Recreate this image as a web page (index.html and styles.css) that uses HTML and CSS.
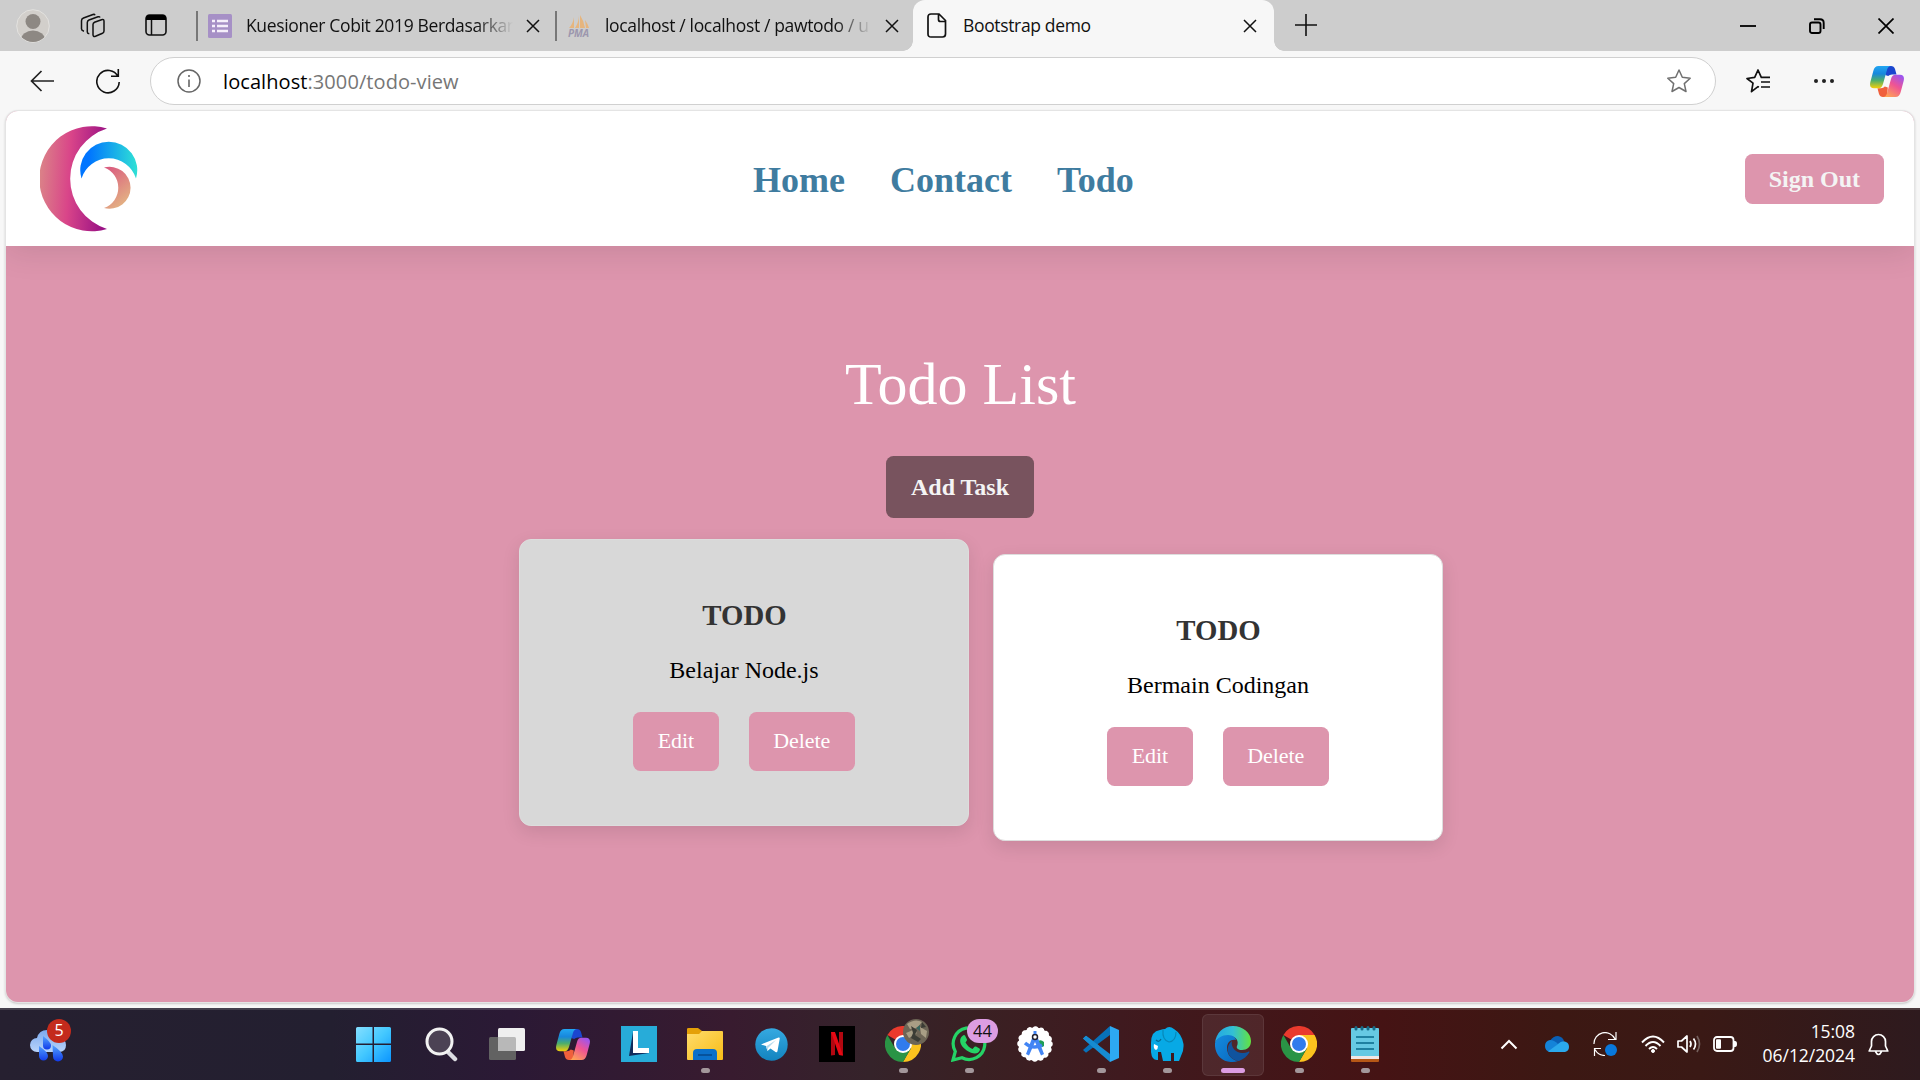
FILE: index.html
```html
<!DOCTYPE html>
<html lang="id">
<head>
<meta charset="utf-8">
<title>Bootstrap demo</title>
<link rel="stylesheet" href="styles.css">
</head>
<body>
<svg class="defs" width="0" height="0" aria-hidden="true">
  <defs>
    <linearGradient id="cpTop" x1="0" y1="0" x2="0" y2="1"><stop offset="0" stop-color="#22a6f2"/><stop offset=".35" stop-color="#1787dc"/><stop offset=".65" stop-color="#4dae6c"/><stop offset="1" stop-color="#f4cf09"/></linearGradient>
    <linearGradient id="cpBottom" x1=".8" y1="0" x2=".2" y2="1"><stop offset="0" stop-color="#9b55f0"/><stop offset=".45" stop-color="#ef5494"/><stop offset="1" stop-color="#ffa653"/></linearGradient>
    <symbol id="copilot" viewBox="0 0 34 31">
      <path d="M17 0h4q3 0 4 3l1.500 5.500H22q-2.500 0-3.800 1.500l-3-1z" fill="#1b46cf"/>
      <path d="M17 31h-4q-3 0-4-3L7.500 22.200H11q2.500 0 3.800-1.700l3 1z" fill="#f0603c"/>
      <path d="M8.500 0H21q-2.800 0-3.900 3.500L13 18q-1.200 4.200-4.300 4.200H4q-5 0-3.700-6L3.300 5Q4.500 0 8.500 0z" fill="url(#cpTop)"/>
      <path d="M25.500 31H13q2.800 0 3.900-3.500L21 13q1.200-4.200 4.300-4.200H30q5 0 3.700 6L30.700 26q-1.200 5-5.200 5z" fill="url(#cpBottom)"/>
    </symbol>
    <symbol id="chrome" viewBox="0 0 36 36">
      <path d="M18 18 2.400 9A18 18 0 0 1 33.600 9z" fill="#ea3a2d"/>
      <path d="M18 9H33.600A18 18 0 0 1 18 36L25.800 22.500z" fill="#fcc31e"/>
      <path d="M10.200 22.500 2.400 9A18 18 0 0 0 18 36L25.800 22.500z" fill="#2a9445"/>
      <circle cx="18" cy="18" r="9" fill="#fff"/><circle cx="18" cy="18" r="7" fill="#317bed"/>
    </symbol>
    <symbol id="close" viewBox="0 0 14 14"><path d="M1 1l12 12M13 1L1 13" fill="none" stroke="#111" stroke-width="1.500"/></symbol>
  </defs>
</svg>

<header class="tabstrip">
  <div class="tab-tools">
    <svg class="profile" width="34" height="34" viewBox="0 0 34 34"><defs><clipPath id="pc"><circle cx="17" cy="17" r="16"/></clipPath></defs><circle cx="17" cy="17" r="16.300" fill="#d2cfcb" stroke="#e3e2df"/><g fill="#8d8883" clip-path="url(#pc)"><circle cx="17" cy="12.500" r="7.500"/><ellipse cx="17" cy="31" rx="12" ry="9.500"/></g></svg>
    <svg class="workspaces" width="26" height="25" viewBox="0 0 26 25" fill="none" stroke="#111" stroke-width="1.500" stroke-linejoin="round"><path d="M13 11.500q0-1.500 1.500-2.200l7-2.600q2.500-.7 2.500 1.500V18q0 1.500-1.500 2.200l-7 3q-2.500.8-2.500-1.400z"/><path d="M20 4.500q-.5-1.200-2-.7L9 7Q7.300 7.700 7.300 9.500V19q0 1.500 2 1.800"/><path d="M15 2.300q-.5-1.300-2-.8L3.500 5Q1.500 5.800 1.500 7.800V16q0 1.500 2.500 2.200"/></svg>
    <svg class="tab-menu" width="22" height="22" viewBox="0 0 22 22"><rect x="1" y="1" width="20" height="20" rx="3.500" fill="none" stroke="#111" stroke-width="1.600"/><path d="M1 6V4q0-3 3-3h14q3 0 3 3v2z" fill="#000"/><path d="M6.500 6v15" stroke="#111" stroke-width="1.500"/></svg>
  </div>
  <div class="tab">
    <svg width="24" height="24" viewBox="0 0 24 24"><rect width="24" height="24" rx="1.500" fill="#a690c6"/><path d="M9 7h11M9 12h11M9 17h11" stroke="#f5effb" stroke-width="2.500"/><path d="M4 7h3M4 12h3M4 17h3" stroke="#f5effb" stroke-width="2.500"/></svg>
    <span class="tab-title fade">Kuesioner Cobit 2019 Berdasarkan</span>
    <svg class="x" width="14" height="14"><use href="#close"/></svg>
  </div>
  <div class="tab">
    <svg class="pma" width="24" height="24" viewBox="0 0 24 24"><path d="M7 3v11H2q4-4 5-11zM12 1v13H8q4-6 4-13zM13 1q4 6 5 13h-5zM18 6q3 4 4 8h-3z" fill="#e6b57e"/><text x="11.500" y="23" text-anchor="middle" class="pma-text">PMA</text></svg>
    <span class="tab-title fade">localhost / localhost / pawtodo / u</span>
    <svg class="x" width="14" height="14"><use href="#close"/></svg>
  </div>
  <div class="tab active">
    <svg width="20" height="25" viewBox="0 0 20 25"><path d="M4 1h8l6.500 6.500V21q0 3-3 3H4q-3 0-3-3V4q0-3 3-3zM11.500 1v5.500q0 2 2 2h5" fill="none" stroke="#111" stroke-width="1.700"/></svg>
    <span class="tab-title">Bootstrap demo</span>
    <svg class="x" width="14" height="14"><use href="#close"/></svg>
  </div>
  <svg class="new-tab" width="22" height="22" viewBox="0 0 22 22"><path d="M11 0v22M0 11h22" stroke="#111" stroke-width="1.600"/></svg>
  <div class="window-buttons">
    <svg width="16" height="16" viewBox="0 0 16 16"><path d="M0 8h16" stroke="#000" stroke-width="1.800"/></svg>
    <svg width="16" height="16" viewBox="0 0 16 16" fill="none" stroke="#000" stroke-width="1.900"><rect x="1" y="4.500" width="10.500" height="10.500" rx="2"/><path d="M5 1.300h6q3.700 0 3.700 3.700v6"/></svg>
    <svg width="16" height="16" viewBox="0 0 16 16"><path d="M.5.500l15 15M15.500.500l-15 15" stroke="#000" stroke-width="1.700"/></svg>
  </div>
</header>

<div class="toolbar">
  <svg class="back" width="24" height="22" viewBox="0 0 24 22"><path d="M24 11H1M11.500 1L1.500 11l10 10" fill="none" stroke="#222" stroke-width="1.700"/></svg>
  <svg class="reload" width="24" height="25" viewBox="0 0 24 25"><path d="M22 7.500A11.200 11.200 0 1 0 23.200 13M22.300 0v7.300h-7.300" fill="none" stroke="#111" stroke-width="1.600"/></svg>
  <div class="address">
    <svg width="24" height="24" viewBox="0 0 24 24"><circle cx="12" cy="12" r="11" fill="none" stroke="#666" stroke-width="1.500"/><path d="M12 10.500v7.500M12 6v2" stroke="#666" stroke-width="1.600"/></svg>
    <span class="url"><span class="host">localhost</span>:3000/todo-view</span>
    <svg class="star" width="24" height="24" viewBox="0 0 24 24"><path d="M12 1l3.300 7.300 7.900.9-5.900 5.400 1.700 7.900-7-4-7 4 1.700-7.900L.8 9.200l7.900-.9z" fill="none" stroke="#707070" stroke-width="1.500" stroke-linejoin="round"/></svg>
  </div>
  <svg class="favs" width="24" height="24" viewBox="0 0 24 24" fill="none" stroke="#111" stroke-width="1.700" stroke-linejoin="round"><path d="M13 18l-1-.3-6.500 5 1.500-8.500L1 9.500l7.700-1.200L12 1l3.300 7.300H24M15 13h9M15 18h9"/></svg>
  <svg class="dots" width="20" height="6" viewBox="0 0 20 6" fill="#222"><circle cx="2" cy="3" r="2"/><circle cx="10" cy="3" r="2"/><circle cx="18" cy="3" r="2"/></svg>
  <svg class="copilot-top" width="34" height="31"><use href="#copilot"/></svg>
</div>

<div class="viewport">
  <nav class="navbar">
    <svg class="logo" width="98" height="106" viewBox="0 0 98 106">
      <defs>
        <linearGradient id="lg1" x1="0" y1=".45" x2="1.150" y2=".55"><stop offset="0" stop-color="#db8388"/><stop offset=".38" stop-color="#d94589"/><stop offset="1" stop-color="#850083"/></linearGradient>
        <linearGradient id="lg2"><stop offset=".15" stop-color="#0075ff"/><stop offset="1" stop-color="#2fe1d5"/></linearGradient>
        <linearGradient id="lg3" x1="0" y1="0" x2=".5" y2="1"><stop offset="0" stop-color="#d9557f"/><stop offset="1" stop-color="#e3b083"/></linearGradient>
      </defs>
      <path d="M67 2.500A52.500 52.500 0 1 0 67 103A52.700 52.700 0 0 1 67 2.500z" fill="url(#lg1)"/>
      <path d="M41.500 52.500A28.500 28.500 0 1 1 96 52.500A28.500 28.500 0 0 0 41.500 52.500z" fill="url(#lg2)"/>
      <path d="M64 41.500A21 21 0 1 1 64 82A21.500 21.500 0 0 0 64 41.500z" fill="url(#lg3)"/>
    </svg>
    <div class="nav-links"><a>Home</a><a>Contact</a><a>Todo</a></div>
    <button class="sign-out">Sign Out</button>
  </nav>
  <main class="todo-page">
    <h1>Todo List</h1>
    <button class="add-task">Add Task</button>
    <section class="cards">
      <article class="card hovered">
        <h2>TODO</h2><p>Belajar Node.js</p>
        <div class="actions"><button>Edit</button><button>Delete</button></div>
      </article>
      <article class="card">
        <h2>TODO</h2><p>Bermain Codingan</p>
        <div class="actions"><button>Edit</button><button>Delete</button></div>
      </article>
    </section>
  </main>
</div>

<footer class="taskbar">
  <div class="weather">
    <svg width="36" height="34" viewBox="0 0 36 34"><defs><linearGradient id="cl" x1="0" y1="0" x2="0" y2="1"><stop offset="0" stop-color="#7ca9ee"/><stop offset="1" stop-color="#b9d4fa"/></linearGradient><linearGradient id="dr" x1="0" y1="0" x2="0" y2="1"><stop offset="0" stop-color="#55a5ff"/><stop offset="1" stop-color="#1039ea"/></linearGradient></defs><path d="M7 24a7 7 0 0 1 0-14Q9 2 17 2t10 8q9 0 9 7t-7 7z" fill="url(#cl)"/><path d="M13 8q8 6 8 9.500a4 4 0 0 1-8 0z" fill="url(#dr)"/><path d="M9 18q9 6 9 10a4.500 4.500 0 0 1-9 0zM22.500 17Q33 24 33 28.500a5 5 0 0 1-10 0z" fill="url(#dr)"/></svg>
    <span class="count">5</span>
  </div>
  <div class="apps">
    <div class="app"><svg width="35" height="35" viewBox="0 0 35 35"><defs><linearGradient id="wn" x1="0" y1="0" x2="1" y2="1"><stop offset="0" stop-color="#85dfff"/><stop offset=".5" stop-color="#43c8ff"/><stop offset="1" stop-color="#0b95ff"/></linearGradient></defs><path d="M1.500 0H16.500V16.500H0V1.500Q0 0 1.500 0zM18 0H33.500Q35 0 35 1.500V16.500H18zM0 18H16.500V35H1.500Q0 35 0 33.500zM18 18H35V33.500Q35 35 33.500 35H18z" fill="url(#wn)"/></svg></div>
    <div class="app"><svg width="33" height="35" viewBox="0 0 33 35"><path d="M22 24l8 8" stroke="#dcdce2" stroke-width="4.500" stroke-linecap="round"/><circle cx="14.500" cy="14.500" r="12.500" fill="#4c4254" stroke="#f2f2f2" stroke-width="3"/></svg></div>
    <div class="app"><svg width="36" height="34" viewBox="0 0 36 34"><rect y="10" width="27" height="23" rx="1.500" fill="#626262"/><rect x="9" y="1" width="27" height="23" rx="1.500" fill="#efefef"/><path d="M9 10h16.500q1.500 0 1.500 1.500V24H9z" fill="#b8b8b8"/></svg></div>
    <div class="app"><svg width="34" height="31"><use href="#copilot"/></svg></div>
    <div class="app"><svg width="36" height="36" viewBox="0 0 36 36"><rect width="36" height="36" fill="#27acd9"/><path d="M12 6 8 30l20-3H13z" fill="#102b5b"/><path d="M12 5h5v17h11v5H12z" fill="#fff"/></svg></div>
    <div class="app running"><svg width="36" height="34" viewBox="0 0 36 34"><defs><linearGradient id="fd" x1="0" y1="0" x2="1" y2="1"><stop offset="0" stop-color="#ffdc6c"/><stop offset="1" stop-color="#f8bc16"/></linearGradient></defs><path d="M0 12V2Q0 1 1.500 1H11l4 3v5z" fill="#e4a008"/><path d="M0 7h12l3-3h20q1 0 1 1v27q0 1-1 1H1q-1 0-1-1z" fill="url(#fd)"/><path d="M6 33v-7q0-4 4-4h16q4 0 4 4v7z" fill="#0b70c9"/><path d="M11 28h14" stroke="#06498b" stroke-width="1.500"/></svg></div>
    <div class="app"><svg width="33" height="33" viewBox="0 0 33 33"><defs><linearGradient id="tg" x1="0" y1="0" x2="0" y2="1"><stop offset="0" stop-color="#35a9e1"/><stop offset="1" stop-color="#1384bf"/></linearGradient></defs><circle cx="16.500" cy="16.500" r="16.200" fill="url(#tg)"/><path d="M6 16.500 23.500 9.500q1.500-.5 1.200 1.300L22.500 23q-.4 2-2 1l-5-3.500L12.500 23l-1.500-5z" fill="#fff"/><path d="M11 18.500 21 12l-8 8-.5 3z" fill="#b4d9ed"/></svg></div>
    <div class="app"><svg width="36" height="36" viewBox="0 0 36 36"><path d="M0 0h36v36H0z"/><path d="M12 6h4v23l-4 .5zM20 6h4v23.500l-4-.5z" fill="#b20710"/><path d="M12 6h4l8 23.500-4-.5z" fill="#e50914"/></svg></div>
    <div class="app running"><svg width="36" height="36"><use href="#chrome"/></svg>
      <svg class="avatar" width="26" height="26" viewBox="0 0 26 26"><circle cx="13" cy="13" r="13" fill="#6d6556"/><path d="M4 5q8-6 15-2l-5 6-7 1zM3 14l7-3 4 3-8 5zM17 8l7 4-1 7-5-4z" fill="#a89e85"/><path d="M8 7l6 4-2 5 6 4-3 3-7-4 2-5zM19 3l4 5-5 1z" fill="#3b3c35"/><path d="M13 9l4-3v6z" fill="#36675f"/></svg></div>
    <div class="app running"><svg width="36" height="36" viewBox="0 0 36 36"><path d="M2 34l2.300-8.500A15.800 15.800 0 1 1 11 31.800z" fill="none" stroke="#25d366" stroke-width="3.200"/><path d="M12 9.500q1-.8 2 0l2 4q.3 1-1.500 3 3 5 7 6.500l2-2.200q.8-.6 1.500-.2l3.500 1.800q.8.600.2 2.200c-1.500 4-7 4-13 0-8-6-8-12-3.700-15.100z" fill="#25d366"/></svg><span class="chat-count">44</span></div>
    <div class="app"><svg width="36" height="36" viewBox="0 0 36 36"><circle cx="18" cy="18" r="16.500" fill="#fff"/><circle cx="18" cy="18" r="15" fill="none" stroke="#fff" stroke-width="5.500" stroke-linecap="round" stroke-dasharray=".1 5.790"/><path d="M21 15q3-2 6 1v4q-2 2-4 1z" fill="#1f9e55"/><path d="M15.500 11h5L27 28l-3 1.500L18 16l-6 13.500L9 28z" fill="#4285f4"/><path d="M8 17q8 7 17 2" fill="none" stroke="#4285f4" stroke-width="3.500"/><circle cx="18" cy="11" r="2.500" fill="#fff" stroke="#223" stroke-width="1.500"/><path d="M18 5v3" stroke="#4285f4" stroke-width="3"/></svg></div>
    <div class="app running"><svg width="36" height="36" viewBox="0 0 36 36"><path d="M0 12.500 3 9.700 27 28v8z" fill="#168bd1"/><path d="M0 24 27 0v9L3 26.700z" fill="#0871b9"/><path d="M0 12.500 3 9.700 16 19.500 11 22.300z" fill="#168bd1"/><path d="M27 0l9 4v28l-9 4z" fill="#2da9f2"/></svg></div>
    <div class="app running"><svg width="36" height="36" viewBox="0 0 36 36"><path d="M2 17Q2 5 11 4 14 3 16 3 20-1 25 3q8 5 9.500 15 .5 7-2.500 12l-2 5h-5V27h-3v8h-8l-2-9q-2 0-3 0v8Q3 35 2 26z" fill="#07a9e5"/><path d="M14 4q-1 10 6 12 7-1 7-10" fill="none" stroke="#0789ba" stroke-width="1.200"/><path d="M7 14q3 3 5-1" fill="none" stroke="#07678f" stroke-width="1.200"/><path d="M5 18l4 2q0 3-2 4-3-1-2-6z" fill="#fff"/></svg></div>
    <div class="app running current"><svg width="36" height="36" viewBox="0 0 36 36"><defs><linearGradient id="ed1"><stop offset="0" stop-color="#22a7e4"/><stop offset=".5" stop-color="#33bfd4"/><stop offset="1" stop-color="#63e33f"/></linearGradient><linearGradient id="ed2" x1="0" y1="0" x2="1" y2="1"><stop offset="0" stop-color="#158be0"/><stop offset="1" stop-color="#0869bd"/></linearGradient></defs><path d="M0 17C1 7 8 0 18 0c10 0 18 7 18 15 0 6-4 9-9 9-4 0-6-2-5-4 2-4 0-10-8-10C7 10 2 13 0 17z" fill="url(#ed1)"/><path d="M0 17c2-5 7-8 13-8 5 0 8 3 8 5-5-1-9 2-9 8 0 7 5 12 11 13C11 39-1 31 0 17z" fill="url(#ed2)"/><path d="M17 15c-8 6-4 19 7 20 5-2 8-5 10-8 1-1 0-2-1-1-10 4-18-4-16-11z" fill="#10539e"/></svg></div>
    <div class="app running"><svg width="36" height="36"><use href="#chrome"/></svg></div>
    <div class="app running"><svg width="28" height="36" viewBox="0 0 28 36"><path d="M0 31h28v4q0 1-1 1H1q-1 0-1-1z" fill="#b65716"/><path d="M0 28h28v5H0z" fill="#f0e7e5"/><path d="M0 3q0-1 1-1h26q1 0 1 1v27H0z" fill="#66c9e3"/><path d="M5 11h18M5 17h18M5 23h18" stroke="#086a8c" stroke-width="1.700"/><path d="M5 1.500v1.500M11 1.500v1.500M17 1.500v1.500M23 1.500v1.500" stroke="#176b87" stroke-width="3" stroke-linecap="round"/></svg></div>
  </div>
  <div class="tray">
    <svg class="chev" width="18" height="11" viewBox="0 0 18 11"><path d="M1.500 9.500 9 2l7.500 7.500" fill="none" stroke="#fff" stroke-width="2"/></svg>
    <svg class="cloud" width="24" height="16" viewBox="0 0 24 16"><path d="M5 5q3-5 8-5 5 1 6 5l-7 5z" fill="#0a5fb5"/><path d="M5 4q4 0 8 4l-8 8q-5-1-5-6t5-6z" fill="#1483d8"/><path d="M3 15.500 13 8q4-4 8-2 3 1 3 5t-4 5H5z" fill="#2ba9ec"/></svg>
    <svg class="sync" width="24" height="24" viewBox="0 0 24 24"><path d="M1 12A11 11 0 0 1 22 7M23 0v7.500h-8M12 23.500q-7 0-10-6M1.500 24v-7.500H8" fill="none" stroke="#fff" stroke-width="1.200"/><circle cx="18" cy="18" r="6" fill="#0878dc"/></svg>
    <svg class="wifi" width="24" height="18" viewBox="0 0 24 18" fill="none" stroke="#fff" stroke-width="1.900"><path d="M1 7.500q11-12 22 0M4.500 11q7.500-8 15 0M8 14q4-4 8 0"/><circle cx="12" cy="16" r="1.500" fill="#fff" stroke-width="1"/></svg>
    <svg class="vol" width="24" height="20" viewBox="0 0 24 20" fill="none" stroke="#fff" stroke-width="1.700"><path d="M1 7h3.500L10 2v16l-5.500-5H1z" stroke-linejoin="round"/><path d="M13 7q2 3 0 6M16.500 4.500q4 5.500 0 11"/><path d="M20 2q5 8 0 16" stroke="#74605d"/></svg>
    <svg class="bat" width="24" height="16" viewBox="0 0 24 16"><rect x="1" y="1" width="19.500" height="14" rx="3" fill="none" stroke="#fff" stroke-width="1.800"/><rect x="3" y="3.300" width="5" height="9.500" rx="1" fill="#fff"/><path d="M21 5h1q2 0 2 3t-2 3h-1z" fill="#fff"/></svg>
    <div class="clock"><span>15:08</span><span>06/12/2024</span></div>
    <svg class="bell" width="21" height="23" viewBox="0 0 21 23"><path d="M1.200 18 3.500 13V8.500a7 7 0 0 1 14 0V13l2.300 5zM7.500 18.500q3 6 6 0" fill="none" stroke="#fff" stroke-width="1.700" stroke-linejoin="round"/></svg>
  </div>
</footer>
</body>
</html>
```
FILE: styles.css
```css
* { box-sizing: border-box; }
body {
  margin: 0;
  width: 1920px;
  height: 1080px;
  overflow: hidden;
  display: flex;
  flex-direction: column;
  background: #f7f7f7;
  font-family: "Open Sans", "Noto Sans", sans-serif;
}
svg { display: block; flex: none; }
.defs { position: absolute; }
button { border: 0; margin: 0; font-family: inherit; }

/* Browser tabs */
.tabstrip {
  height: 51px;
  flex: none;
  display: flex;
  align-items: center;
  background: #cdcdcd;
}
.tab-tools { width: 196px; flex: none; display: flex; align-items: center; padding-left: 16px; }
.workspaces { margin-left: 30px; }
.tab-menu { margin: 0 0 1px 39px; }
.tab {
  position: relative;
  width: 359px;
  height: 51px;
  flex: none;
  display: flex;
  align-items: center;
  padding: 0 15px 0 12px;
  background: linear-gradient(#777, #777) left center / 2px 30px no-repeat;
}
.tab-title { margin-left: 14px; padding-bottom: 1px; font-size: 17.500px; line-height: 24px; white-space: nowrap; color: #111; letter-spacing: -.35px; }
.fade { width: 268px; -webkit-mask-image: linear-gradient(90deg, #000 230px, transparent 267px); mask-image: linear-gradient(90deg, #000 230px, transparent 267px); }
.tab .x { margin-left: auto; }
.pma { overflow: visible; }
.pma-text { font: italic bold 10px "Open Sans", sans-serif; fill: #9c97ae; }
.tab.active { width: 361px; margin-left: -1px; padding: 0 17px 0 14px; background: #f7f7f7; border-radius: 12px 12px 0 0; }
.tab.active .tab-title { margin-left: 16px; }
.tab.active::before, .tab.active::after {
  content: "";
  position: absolute;
  bottom: 0;
  width: 10px;
  height: 10px;
}
.tab.active::before { left: -10px; background: radial-gradient(circle at 0 0, transparent 9.500px, #f7f7f7 10px); }
.tab.active::after { right: -10px; background: radial-gradient(circle at 100% 0, transparent 9.500px, #f7f7f7 10px); }
.new-tab { margin: 0 0 2px 21px; }
.window-buttons { margin-left: auto; display: grid; grid-template-columns: repeat(3, 69px); justify-items: center; }

/* Address bar row */
.toolbar { height: 60px; flex: none; display: flex; align-items: center; padding: 0 16px 0 30px; }
.back { margin-bottom: 1px; }
.reload { margin-left: 42px; }
.address {
  margin-left: 30px;
  width: 1566px;
  height: 48px;
  display: flex;
  align-items: center;
  padding: 0 24px 0 26px;
  background: #fff;
  border: 1.500px solid #d0d0d0;
  border-radius: 24px;
}
.url { margin-left: 22px; font-size: 20px; color: #767676; letter-spacing: .08px; white-space: nowrap; }
.host { color: #000; }
.star { margin-left: auto; }
.favs { margin-left: 30px; }
.dots { margin-left: 44px; }
.copilot-top { margin-left: auto; }

/* Web page */
.viewport {
  margin: 0 6px;
  height: 891px;
  flex: none;
  display: flex;
  flex-direction: column;
  overflow: hidden;
  border-radius: 12px;
  background: #dd95ad;
  box-shadow: 0 0 0 1px #e4e4e4, 0 1px 3px #999;
  font-family: "Liberation Serif", "Times New Roman", serif;
}
.navbar {
  position: relative;
  height: 135px;
  flex: none;
  display: flex;
  align-items: center;
  justify-content: space-between;
  padding: 0 30px 0 34px;
  background: #fff;
  box-shadow: 0 6px 30px rgba(0, 0, 0, .1);
}
.nav-links { display: flex; gap: 45px; margin-left: 4px; padding-top: 2px; color: #3f7ca0; font-size: 36px; font-weight: bold; line-height: 42px; }
.sign-out { height: 50px; padding: 2px 24px 0; border-radius: 7.500px; background: #dd95ad; color: #f4f4f4; font-size: 24px; font-weight: bold; }
.todo-page { display: flex; flex-direction: column; align-items: center; padding-top: 103px; }
h1 { margin: 0 0 0 1px; font-size: 60px; line-height: 70px; font-weight: 400; color: #fff; }
.add-task { margin-top: 37px; width: 148px; height: 62px; padding: 0; border-radius: 7.500px; background: #78535e; color: #f4f4f4; font-size: 24px; font-weight: bold; }
.cards { display: flex; gap: 24px; margin-top: 36px; margin-left: 42px; }
.card {
  width: 450px;
  height: 287px;
  padding: 58px 0 0;
  display: flex;
  flex-direction: column;
  align-items: center;
  background: #fff;
  border: 1px solid #ddd;
  border-radius: 12px;
  box-shadow: 0 6px 18px rgba(0, 0, 0, .1);
}
.card.hovered { background: #d8d8d8; transform: translateY(-15px); }
h2 { margin: 0 0 0 1px; font-size: 28.800px; line-height: 34px; color: #333; }
p { margin: 24px 0 0; font-size: 24px; line-height: 28px; color: #000; }
.actions { display: flex; gap: 30px; margin-top: 28px; }
.actions button { height: 59px; padding: 0 24.500px 2px; border-radius: 7.500px; background: #dd95ad; color: #fff; font-size: 22px; letter-spacing: -.05px; }

/* Windows taskbar */
.taskbar {
  margin-top: auto;
  height: 72px;
  flex: none;
  display: flex;
  align-items: center;
  border-top: 2px solid rgba(255, 255, 255, .15);
  background: linear-gradient(90deg, #262030 0, #231f30 330px, #2b1935 510px, #381b2f 730px, #35232a 870px, #3a2023 980px, #3f1a1f 1120px, #451314 1380px, #3c1813 1560px, #3a1915 1700px, #2e1a1e 1920px) border-box;
}
.weather { position: relative; margin-left: 30px; width: 36px; }
.count {
  position: absolute;
  left: 17px;
  top: -9px;
  width: 24px;
  height: 24px;
  border-radius: 50%;
  background: #c42b1c;
  color: #fff;
  font-size: 16px;
  line-height: 23px;
  text-align: center;
}
.apps { margin-left: 274px; display: grid; grid-template-columns: 68px repeat(15, 66px); height: 70px; }
.app { position: relative; display: flex; align-items: center; justify-content: center; padding-bottom: 2px; }
.app:first-child { padding-right: 2px; }
.running::after { content: ""; position: absolute; left: 29px; bottom: 7px; width: 9px; height: 5px; border-radius: 3px; background: #a3979b; }
.current::before { content: ""; position: absolute; left: 2px; top: 4px; width: 60px; height: 60px; border: 1px solid rgba(255, 255, 255, .08); border-radius: 6px; background: rgba(255, 255, 255, .07); }
.current svg { position: relative; }
.current::after { left: 21px; width: 24px; background: #dc9de2; }
.avatar { position: absolute; left: 33px; top: 9px; }
.chat-count { position: absolute; left: 31px; top: 9px; width: 31px; height: 24px; border-radius: 12px; background: #dc9de2; color: #111; font-size: 16.500px; line-height: 23px; text-align: center; }
.tray { margin-left: 102px; display: flex; align-items: center; padding-bottom: 2px; }
.chev { margin-right: 27px; }
.cloud { margin-right: 24px; }
.sync { margin-right: 24px; }
.wifi, .vol { margin-right: 12px; }
.clock { width: 118px; display: flex; flex-direction: column; align-items: flex-end; color: #fff; font-size: 17.500px; line-height: 24px; letter-spacing: -.05px; padding-bottom: 2px; }
.bell { margin-left: 13px; }
```
